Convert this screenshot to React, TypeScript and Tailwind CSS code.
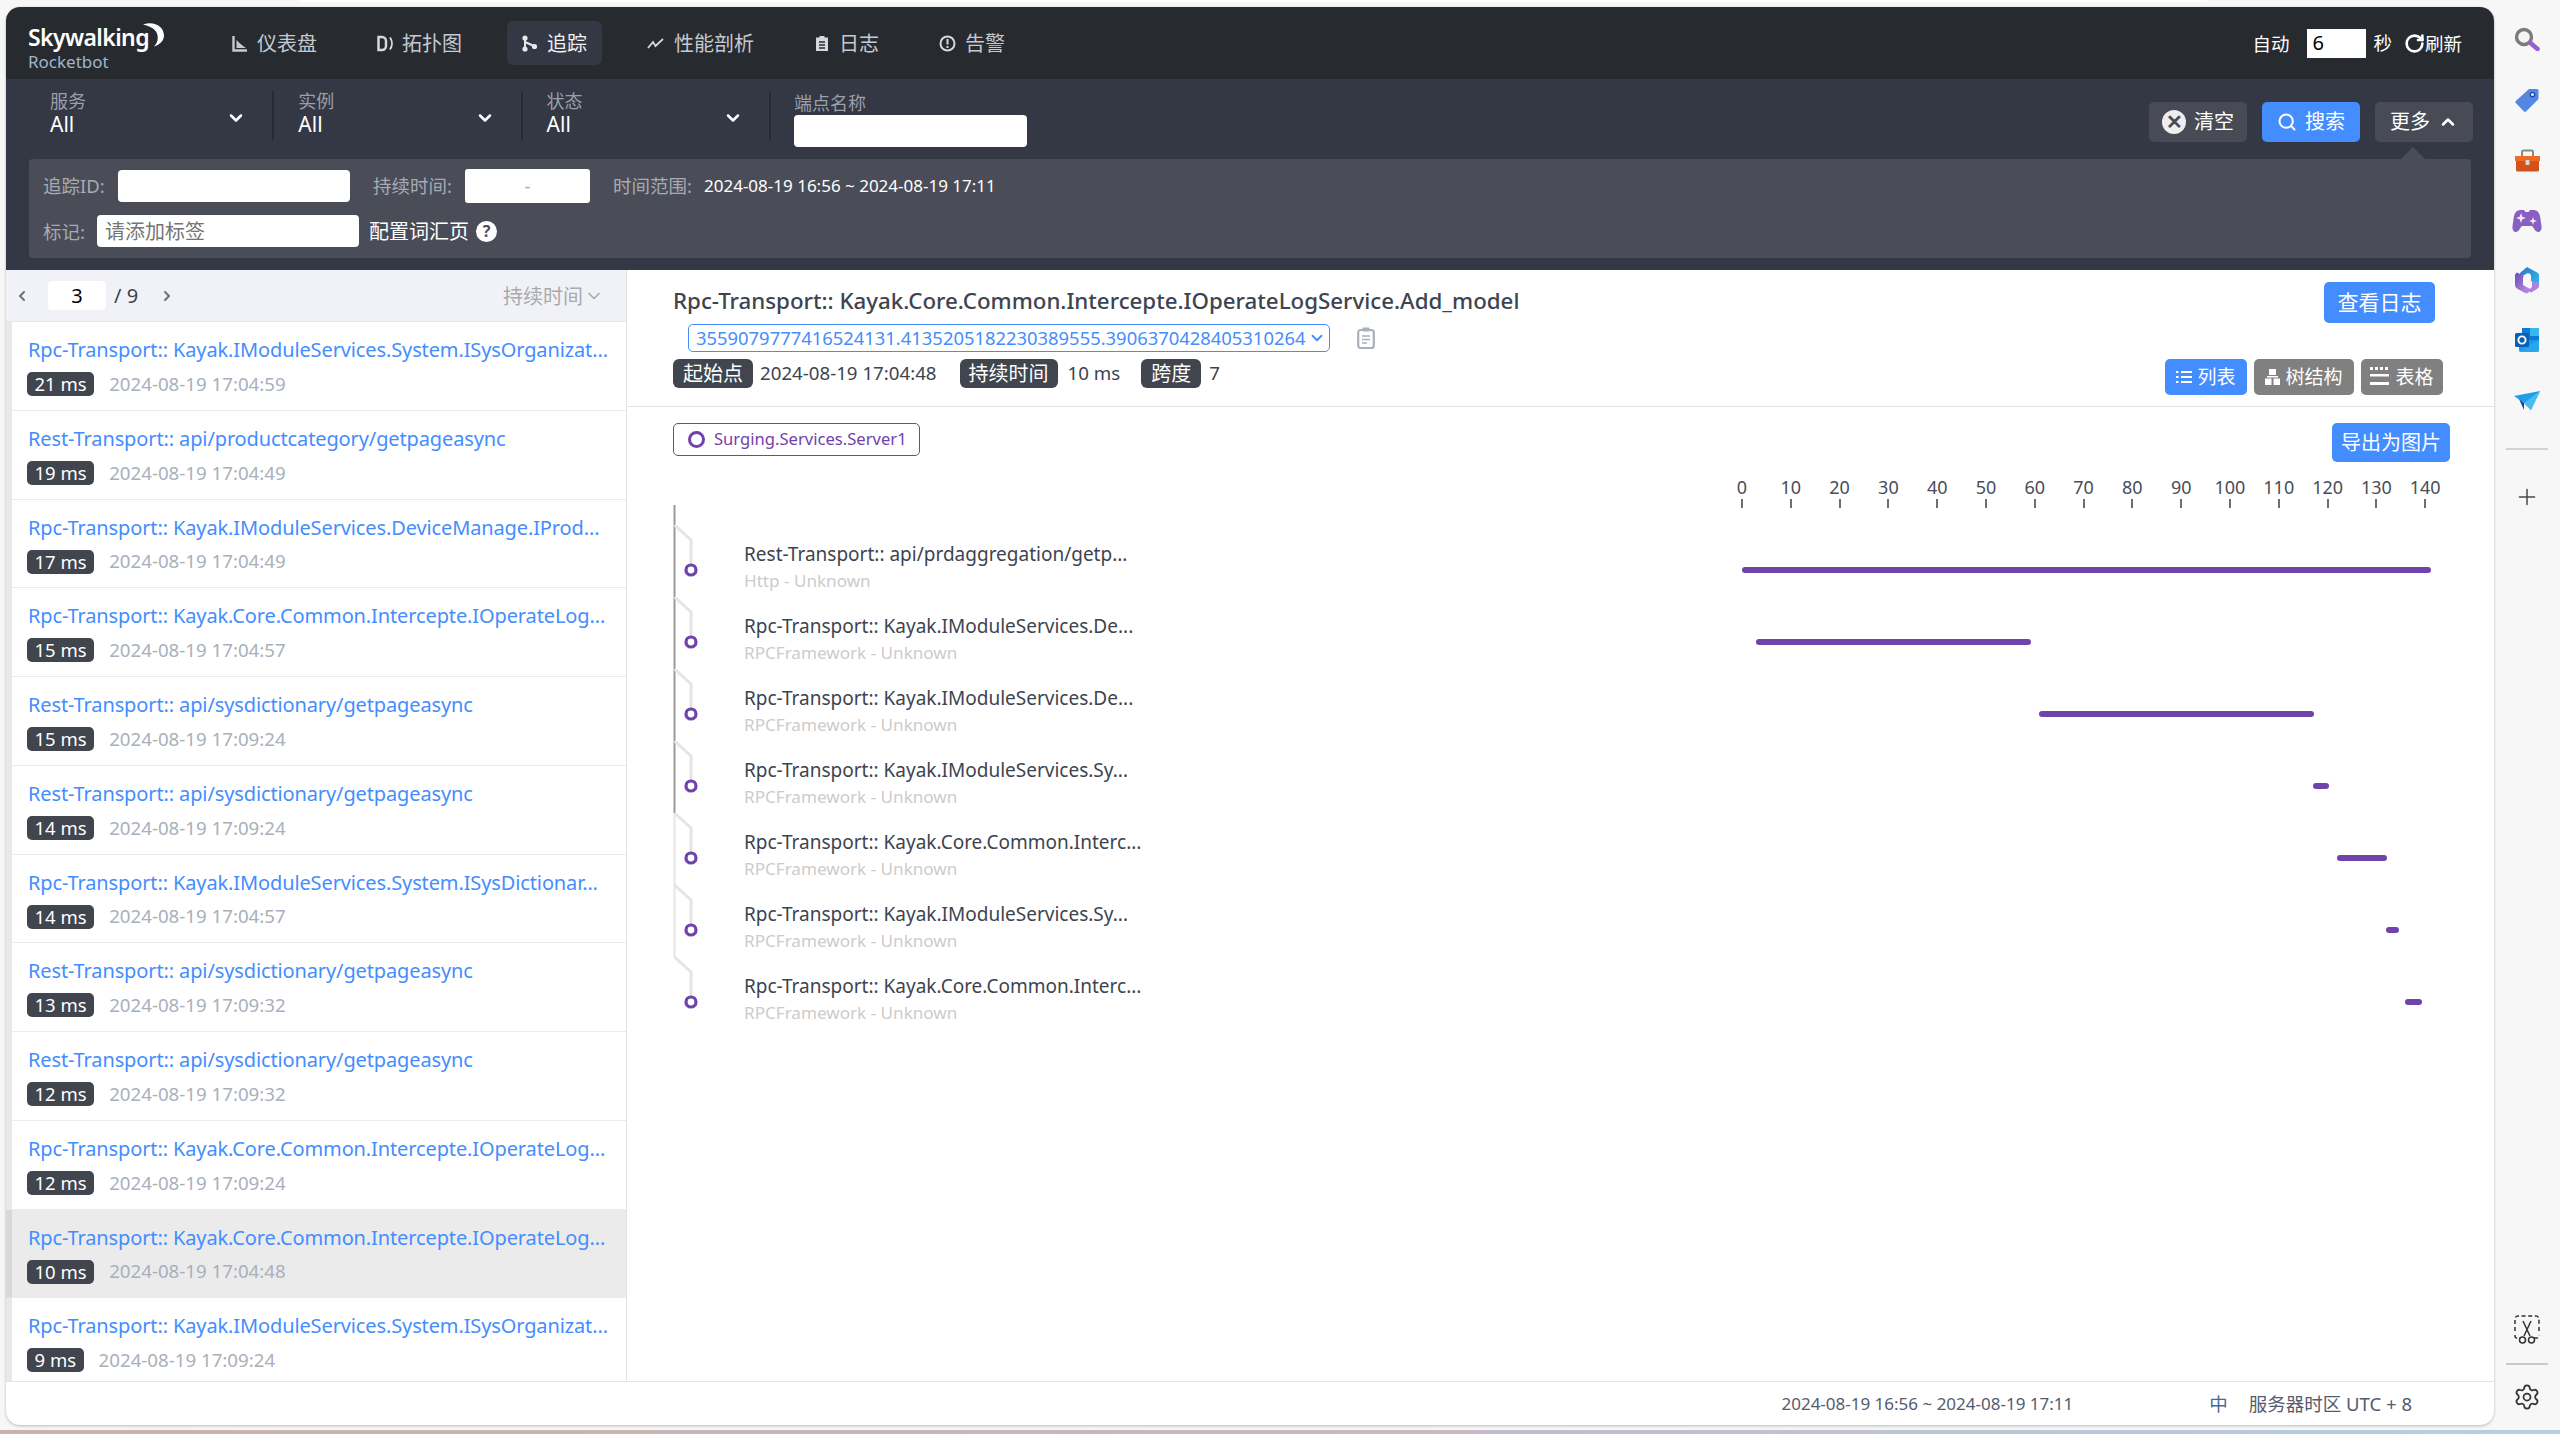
import { ChevronDown, ChevronLeft, ChevronRight, ChevronUp, Plus, RotateCw, Search, Settings } from "lucide-react";

const FONT = "font-['Noto_Sans','Noto_Sans_CJK_SC',sans-serif]";

const traces = [
  { title: "Rpc-Transport:: Kayak.IModuleServices.System.ISysOrganizat...", ms: "21 ms", time: "2024-08-19 17:04:59" },
  { title: "Rest-Transport:: api/productcategory/getpageasync", ms: "19 ms", time: "2024-08-19 17:04:49" },
  { title: "Rpc-Transport:: Kayak.IModuleServices.DeviceManage.IProd...", ms: "17 ms", time: "2024-08-19 17:04:49" },
  { title: "Rpc-Transport:: Kayak.Core.Common.Intercepte.IOperateLog...", ms: "15 ms", time: "2024-08-19 17:04:57" },
  { title: "Rest-Transport:: api/sysdictionary/getpageasync", ms: "15 ms", time: "2024-08-19 17:09:24" },
  { title: "Rest-Transport:: api/sysdictionary/getpageasync", ms: "14 ms", time: "2024-08-19 17:09:24" },
  { title: "Rpc-Transport:: Kayak.IModuleServices.System.ISysDictionar...", ms: "14 ms", time: "2024-08-19 17:04:57" },
  { title: "Rest-Transport:: api/sysdictionary/getpageasync", ms: "13 ms", time: "2024-08-19 17:09:32" },
  { title: "Rest-Transport:: api/sysdictionary/getpageasync", ms: "12 ms", time: "2024-08-19 17:09:32" },
  { title: "Rpc-Transport:: Kayak.Core.Common.Intercepte.IOperateLog...", ms: "12 ms", time: "2024-08-19 17:09:24" },
  { title: "Rpc-Transport:: Kayak.Core.Common.Intercepte.IOperateLog...", ms: "10 ms", time: "2024-08-19 17:04:48", active: true },
  { title: "Rpc-Transport:: Kayak.IModuleServices.System.ISysOrganizat...", ms: "9 ms", time: "2024-08-19 17:09:24" },
];

const spans = [
  { title: "Rest-Transport:: api/prdaggregation/getp...", sub: "Http - Unknown", start: 0, width: 689, top: -29, end: 72, dark: true },
  { title: "Rpc-Transport:: Kayak.IModuleServices.De...", sub: "RPCFramework - Unknown", start: 14, width: 275, top: 0, end: 72, dark: true },
  { title: "Rpc-Transport:: Kayak.IModuleServices.De...", sub: "RPCFramework - Unknown", start: 297, width: 275, top: 0, end: 72, dark: true },
  { title: "Rpc-Transport:: Kayak.IModuleServices.Sy...", sub: "RPCFramework - Unknown", start: 571, width: 16, top: 0, end: 63, dark: true },
  { title: "Rpc-Transport:: Kayak.Core.Common.Interc...", sub: "RPCFramework - Unknown", start: 595, width: 50, top: -9, end: 72, dark: false },
  { title: "Rpc-Transport:: Kayak.IModuleServices.Sy...", sub: "RPCFramework - Unknown", start: 644, width: 13, top: 0, end: 63, dark: false },
  { title: "Rpc-Transport:: Kayak.Core.Common.Interc...", sub: "RPCFramework - Unknown", start: 663, width: 17, top: 0, end: 0, dark: false },
];

const ticks = [0, 10, 20, 30, 40, 50, 60, 70, 80, 90, 100, 110, 120, 130, 140];

function DashIcon() {
  return (
    <svg viewBox="0 0 16 17" className="h-[17px] w-[16px]" fill="none">
      <path d="M1.5 1v14.5H15" stroke="#c5c9d0" strokeWidth="2.4" />
      <path d="M4.5 13V5l3 3 3 2.5 3.5 2.5z" fill="#c5c9d0" />
    </svg>
  );
}

function TopoIcon() {
  return (
    <svg viewBox="0 0 16 17" className="h-[17px] w-[16px]" fill="none" stroke="#d5d8dd" strokeWidth="2.5">
      <path d="M1.5 2h3.5a4 4 0 0 1 4 4v5a4 4 0 0 1-4 4H1.5z" />
      <path d="M13 2.5c2.5 3.5 2.5 8.5 0 12" strokeWidth="2" />
    </svg>
  );
}

function TraceIcon() {
  return (
    <svg viewBox="0 0 16 17" className="h-[17px] w-[16px]" fill="#e6e8eb" stroke="#e6e8eb" strokeWidth="2">
      <path d="M3 3v11M3 7l9 4" fill="none" />
      <circle cx="3" cy="3" r="1.6" />
      <circle cx="3" cy="14" r="1.6" />
      <circle cx="12.5" cy="11.5" r="1.6" />
    </svg>
  );
}

function ProfileIcon() {
  return (
    <svg viewBox="0 0 18 11" className="h-[11px] w-[18px]" fill="none" stroke="#d5d8dd" strokeWidth="1.8">
      <path d="M1 10l5-6 2.5 4L16 1" />
    </svg>
  );
}

function LogIcon() {
  return (
    <svg viewBox="0 0 16 17" className="h-[17px] w-[16px]">
      <path d="M2 2.5h3.5V1h5v1.5H14V16H2z" fill="#d5d8dd" />
      <path d="M5 7h6M5 10h6M5 13h6" stroke="#272b30" strokeWidth="1.4" />
    </svg>
  );
}

function AlertIcon() {
  return (
    <svg viewBox="0 0 17 17" className="h-[17px] w-[17px]" fill="none">
      <circle cx="8.5" cy="8.5" r="7" stroke="#d5d8dd" strokeWidth="2" />
      <path d="M8.5 4v5.5M8.5 11v2" stroke="#d5d8dd" strokeWidth="2" />
    </svg>
  );
}

function NavItem({ icon, label, active }: { icon: React.ReactNode; label: string; active?: boolean }) {
  return (
    <div className={`flex h-[44px] items-center gap-[9px] rounded-[6px] px-[15px] text-[20px] ${active ? "bg-[#333844] text-[#eef0f2]" : "text-[#c5c9d0]"}`}>
      {icon}
      <span className="pt-[2px]">{label}</span>
    </div>
  );
}

function Select({ label }: { label: string }) {
  return (
    <div className="relative flex h-[49px] w-[248.3px] flex-col border-r-2 border-[#272b30] pl-[24px]">
      <div className="-mt-px text-[18px] leading-[22px] text-[#9a9fa9]">{label}</div>
      <div className="text-[21px] leading-[24px] text-white">All</div>
      <ChevronDown className="absolute right-[26px] top-[17px] h-[20px] w-[20px] text-white" strokeWidth={3} />
    </div>
  );
}

function ToolButton({ children, blue }: { children: React.ReactNode; blue?: boolean }) {
  return (
    <div className={`flex h-[40px] w-[98px] items-center justify-center gap-[8px] rounded-[5px] text-[20px] text-white ${blue ? "bg-[#448dfe]" : "bg-[#484b55]"}`}>
      {children}
    </div>
  );
}

function ViewButton({ children, blue, w }: { children: React.ReactNode; blue?: boolean; w: string }) {
  return (
    <div className={`flex h-[36px] items-center justify-center gap-[5px] rounded-[5px] text-[19px] text-white ${w} ${blue ? "bg-[#448dfe]" : "bg-[#808080]"}`}>
      {children}
    </div>
  );
}

function MetaTag({ children, w }: { children: React.ReactNode; w: string }) {
  return <span className={`flex h-[29px] items-center justify-center rounded-[6px] bg-[#40454e] text-[20px] text-white ${w}`}>{children}</span>;
}

function TraceRow({ item }: { item: (typeof traces)[number] }) {
  return (
    <div className={`h-[88.75px] shrink-0 border-b border-l-[6px] border-b-[#ebebeb] pl-[16px] pt-[16px] ${item.active ? "border-l-[#d8d8d8] bg-[#ebebeb]" : "border-l-[#e8e8e8] bg-white"}`}>
      <div className="h-[24px] whitespace-nowrap text-[20px] leading-[24px] tracking-[-0.12px] text-[#448dfe]">{item.title}</div>
      <div className="mt-[10px] flex h-[24px] items-center gap-[15px]">
        <span className="-ml-px flex h-[24px] items-center rounded-[5px] bg-[#40454e] px-[7.5px] text-[18.5px] text-white">{item.ms}</span>
        <span className="text-[18.7px] text-[#a9b0bc]">{item.time}</span>
      </div>
    </div>
  );
}

function SpanRow({ span }: { span: (typeof spans)[number] }) {
  const trunk = span.dark ? "#999999" : "#e5e5e5";
  return (
    <div className="flex h-[72px] shrink-0">
      <svg viewBox="0 0 71 72" className="ml-[46px] h-[72px] w-[71px] shrink-0 overflow-visible" fill="none">
        <path d={`M1.5 ${span.top}V${span.end}`} stroke={trunk} strokeWidth="2" />
        <path d="M1.5 -9L18 6V36" stroke="#e5e5e5" strokeWidth="3" />
        <circle cx="18" cy="36" r="5" fill="#fff" stroke="#6f42ac" strokeWidth="3.2" />
      </svg>
      <div className="w-[998px] shrink-0 pt-[8px]">
        <div className="h-[24px] whitespace-nowrap text-[19px] leading-[24px] text-[#3d444f]">{span.title}</div>
        <div className="mt-[4px] h-[22px] whitespace-nowrap text-[17.1px] leading-[22px] text-[#cccccc]">{span.sub}</div>
      </div>
      <div className="flex-1 pt-[33px]">
        <div className="h-[6px] rounded-[3px] bg-[#6f42ac]" style={{ marginLeft: span.start, width: span.width }} />
      </div>
    </div>
  );
}

function SideIcons() {
  return (
    <div className="flex flex-col items-center pt-[2px]">
      <div className="flex h-[60px] items-center justify-center">
        <svg viewBox="0 0 26 24" className="h-[24px] w-[26px]" fill="none">
          <circle cx="10" cy="10" r="7.5" stroke="#7c7c7c" strokeWidth="3.4" fill="#f4f4f4" />
          <path d="M16.5 16l7 6" stroke="#9462cf" strokeWidth="4.5" strokeLinecap="round" />
        </svg>
      </div>
      <div className="flex h-[61px] items-center justify-center">
        <svg viewBox="0 0 24 24" className="h-[24px] w-[24px]">
          <path d="M14 1h8a1.5 1.5 0 0 1 1.5 1.5V11L11 23.5a1.5 1.5 0 0 1-2 0L.8 15a1.5 1.5 0 0 1 0-2z" fill="#5487e3" />
          <circle cx="17.5" cy="6.5" r="2.2" fill="#e8ecf6" stroke="#23439c" strokeWidth="1.3" />
        </svg>
      </div>
      <div className="flex h-[61px] items-center justify-center">
        <svg viewBox="0 0 27 23" className="h-[23px] w-[27px]" fill="none">
          <path d="M8 7V3a1.5 1.5 0 0 1 1.5-1.5h8A1.5 1.5 0 0 1 19 3v4" stroke="#8a8a8a" strokeWidth="2" />
          <path d="M1 7h25v5H1z" fill="#ef6a25" />
          <path d="M2 12h23v9a1.5 1.5 0 0 1-1.5 1.5h-20A1.5 1.5 0 0 1 2 21z" fill="#d4511a" />
          <rect x="11.5" y="11" width="4" height="5" rx="1" fill="#d7d7d7" />
        </svg>
      </div>
      <div className="flex h-[59px] items-center justify-center">
        <svg viewBox="0 0 30 24" className="h-[24px] w-[30px]">
          <path d="M8 1h4l1.5 2h3L18 1h4c3 0 5 2 6 6l1.5 10c.5 4-1.5 6-3.5 6-2.5 0-4-4-6-6H10c-2 2-3.5 6-6 6-2 0-4-2-3.5-6L2 7c1-4 3-6 6-6z" fill="#8a5fc4" />
          <path d="M9 4l1.3 3.7L14 9l-3.7 1.3L9 14l-1.3-3.7L4 9l3.7-1.3zM21 8l1 3 3 1-3 1-1 3-1-3-3-1 3-1z" fill="#f2ecfa" />
        </svg>
      </div>
      <div className="flex h-[60px] items-center justify-center">
        <svg viewBox="0 0 24 27" className="h-[27px] w-[24px]">
          <defs>
            <linearGradient id="cpA" x1="0" y1="0" x2="1" y2="1">
              <stop offset="0" stopColor="#2f6fd0" />
              <stop offset="1" stopColor="#2ac3e8" />
            </linearGradient>
            <linearGradient id="cpB" x1="0" y1="0" x2="1" y2="1">
              <stop offset="0" stopColor="#6a4bb8" />
              <stop offset="1" stopColor="#c596e6" />
            </linearGradient>
          </defs>
          <path d="M12 0l10 5.5a3 3 0 0 1 2 3V18l-8-4V9c0-2-2-3-4-2.5L5 10V6z" fill="url(#cpA)" />
          <path d="M0 8.5C0 7 1 6 2 5.5L9 9v0l-1 1.5V18l8 4.5L13 26a3 3 0 0 1-3 0l-8-4.5A4 4 0 0 1 0 18z" fill="url(#cpB)" />
          <path d="M24 16v3a3.5 3.5 0 0 1-2 3l-6 3.5-4-2 4-2.5c1-.7 1-2 1-3v-4z" fill="#b07fe0" />
        </svg>
      </div>
      <div className="flex h-[60px] items-center justify-center">
        <svg viewBox="0 0 24 24" className="h-[24px] w-[24px]">
          <path d="M7 0h15a2 2 0 0 1 2 2v10H7z" fill="#0f78d4" />
          <path d="M15 0h7a2 2 0 0 1 2 2v6h-9z" fill="#35b8f1" />
          <path d="M4 12h20v10a2 2 0 0 1-2 2H6a2 2 0 0 1-2-2z" fill="#14a0e8" />
          <path d="M4 24l20-12v10a2 2 0 0 1-2 2z" fill="#28a8ea" />
          <rect x="0" y="5" width="14" height="14" rx="1.5" fill="#0a5fb5" />
          <circle cx="7" cy="12" r="3.6" fill="none" stroke="#fff" strokeWidth="1.9" />
        </svg>
      </div>
      <div className="flex h-[60px] items-center justify-center">
        <svg viewBox="0 0 26 19" className="h-[19px] w-[26px]">
          <path d="M0 5l26-5-9 19-7-7z" fill="#1f9fe8" />
          <path d="M5 8l5 4v7z" fill="#0a4a9c" />
          <path d="M10 12L26 0 17 19z" fill="#48bdf2" />
        </svg>
      </div>
      <div className="mt-[18px] h-[2px] w-[42px] bg-[#d3d3d3]" />
      <div className="mt-[27px] flex h-[40px] items-center justify-center">
        <Plus className="h-[26px] w-[26px] text-[#4a4a4a]" strokeWidth={1.4} />
      </div>
    </div>
  );
}

export default function App() {
  return (
    <div className={`flex h-[1434px] w-[2560px] flex-col overflow-hidden bg-[#f7f7f7] ${FONT}`}>
      <div className="ml-[302px] h-[2px] w-[1905px] bg-white" />
      <div className="mt-[5px] flex min-h-0 flex-1">
        {/* browser tab */}
        <div className="ml-[6px] mb-[5px] flex w-[2488px] flex-col overflow-hidden rounded-[14px] bg-white shadow-[0_1px_3px_rgba(0,0,0,0.25)]">
          {/* top nav */}
          <div className="flex h-[72px] shrink-0 items-center bg-[#272b30] text-white">
            <div className="relative ml-[22px] h-[50px] w-[189px] shrink-0 pt-[5px]">
              <div className="text-[23px] font-semibold leading-[28px] tracking-[-0.6px] text-white">Skywalking</div>
              <div className="mt-px text-[17px] leading-[20px] text-[#9fb5cc]">Rocketbot</div>
              <svg viewBox="0 0 21 24" className="absolute left-[115px] top-[4px] h-[25px] w-[21px]">
                <path d="M0 2C11-2 21 4 21 13 21 18 17 22 11 24 15 20 16 14 13 9 10 5 5 3 0 2z" fill="#fff" />
              </svg>
            </div>
            <div className="flex items-center gap-[30px]">
              <NavItem icon={<DashIcon />} label="仪表盘" />
              <NavItem icon={<TopoIcon />} label="拓扑图" />
              <NavItem icon={<TraceIcon />} label="追踪" active />
              <NavItem icon={<ProfileIcon />} label="性能剖析" />
              <NavItem icon={<LogIcon />} label="日志" />
              <NavItem icon={<AlertIcon />} label="告警" />
            </div>
            <div className="ml-auto flex items-center pr-[32px] text-[18.5px]">
              <span className="pt-[2px]">自动</span>
              <div className="ml-[18px] flex h-[29px] w-[59px] items-center bg-white pl-[5px] text-[20px] text-black">6</div>
              <span className="ml-[7px]">秒</span>
              <RotateCw className="ml-[12px] h-[21px] w-[21px]" strokeWidth={3} />
              <span className="pt-[2px]">刷新</span>
            </div>
          </div>

          {/* search bar */}
          <div className="h-[191px] shrink-0 bg-[#333844]">
            <div className="flex h-[80px]">
              <div className="flex pl-[20px] pt-[12px]">
                <Select label="服务" />
                <Select label="实例" />
                <Select label="状态" />
                <div className="pl-[23px]">
                  <div className="text-[18px] leading-[24px] text-[#9a9fa9]">端点名称</div>
                  <div className="h-[32px] w-[233px] rounded-[4px] bg-white" />
                </div>
              </div>
              <div className="ml-auto flex gap-[15px] pr-[21px] pt-[23px]">
                <ToolButton>
                  <span className="flex h-[24px] w-[24px] items-center justify-center rounded-full bg-[#eeeeee] text-[20px] font-bold leading-none text-[#484b55]">✕</span>
                  <span>清空</span>
                </ToolButton>
                <ToolButton blue>
                  <Search className="h-[20px] w-[20px]" strokeWidth={2.4} />
                  <span>搜索</span>
                </ToolButton>
                <ToolButton>
                  <span>更多</span>
                  <ChevronUp className="h-[20px] w-[20px]" strokeWidth={3} />
                </ToolButton>
              </div>
            </div>
            {/* more filters */}
            <div className="relative mx-[23px] flex h-[99px] flex-col gap-[13px] rounded-[4px] bg-[#4a4d58] pl-[14px] pt-[11px] text-[18.5px] text-[#a6aab3]">
              <div className="absolute right-[46px] top-[-12px] h-0 w-0 border-x-[12px] border-b-[12px] border-x-transparent border-b-[#4a4d58]" />
              <div className="flex h-[32px] items-center">
                <span className="w-[75px]">追踪ID:</span>
                <div className="h-[32px] w-[232px] rounded-[4px] bg-white" />
                <span className="ml-[23px] w-[92px]">持续时间:</span>
                <div className="flex h-[34px] w-[125px] items-center justify-center rounded-[3px] bg-white text-[#aaaaaa]">-</div>
                <span className="ml-[23px] w-[91px]">时间范围:</span>
                <span className="text-[17px] text-white">2024-08-19 16:56 ~ 2024-08-19 17:11</span>
              </div>
              <div className="flex h-[32px] items-center">
                <span className="w-[54px] pt-[2px]">标记:</span>
                <div className="flex h-[32px] w-[262px] items-center rounded-[4px] bg-white pl-[8px] pt-[2px] text-[20px] text-[#757575]">请添加标签</div>
                <span className="ml-[10px] pt-[2px] text-[20px] text-white">配置词汇页</span>
                <span className="ml-[7px] flex h-[21px] w-[21px] items-center justify-center rounded-full bg-white text-[16px] font-bold text-[#4a4d58]">?</span>
              </div>
            </div>
          </div>

          {/* main */}
          <div className="flex min-h-0 flex-1">
            <div className="flex w-[621px] shrink-0 flex-col border-r border-[#e4e4e4]">
              <div className="flex h-[52px] shrink-0 items-center border-b border-[#e4e6ec] bg-[#f0f2f7] pl-[8px] pr-[22px]">
                <ChevronLeft className="h-[26px] w-[16px] text-[#6b717c]" strokeWidth={3} />
                <div className="ml-[18px] flex h-[29px] w-[58px] items-center justify-center rounded-[4px] bg-white text-[20px] text-black">3</div>
                <span className="ml-[8px] text-[20px] text-[#3d444f]">/ 9</span>
                <ChevronRight className="ml-[21px] h-[26px] w-[16px] text-[#6b717c]" strokeWidth={3} />
                <span className="ml-auto pt-[3px] text-[20px] text-[#aaaaaa]">持续时间</span>
                <ChevronDown className="ml-[1px] h-[20px] w-[20px] text-[#aaaaaa]" strokeWidth={2} />
              </div>
              <div className="flex min-h-0 flex-1 flex-col overflow-hidden">
                {traces.map((t, i) => (
                  <TraceRow key={i} item={t} />
                ))}
              </div>
            </div>

            <div className="flex min-w-0 flex-1 flex-col">
              <div className="flex h-[137px] shrink-0 justify-between border-b border-[#e4e4e4] pl-[46px] pr-[51px]">
                <div>
                  <div className="mt-[19px] h-[25px] whitespace-nowrap text-[22.3px] font-medium leading-[24px] text-[#3d444f]">Rpc-Transport:: Kayak.Core.Common.Intercepte.IOperateLogService.Add_model</div>
                  <div className="ml-[15px] mt-[10px] flex items-center">
                    <div className="flex h-[28px] w-[642px] items-center justify-between rounded-[5px] border border-[#448dfe] pl-[7px] pr-[3px] text-[18.4px] leading-none text-[#448dfe]">
                      <span className="whitespace-nowrap">3559079777416524131.4135205182230389555.3906370428405310264</span>
                      <ChevronDown className="h-[18px] w-[18px]" strokeWidth={2.4} />
                    </div>
                    <svg viewBox="0 0 18 22" className="ml-[27px] h-[22px] w-[18px]" fill="none">
                      <rect x="1.2" y="3" width="15.6" height="18" rx="2.5" stroke="#a8b0bd" strokeWidth="2.2" />
                      <rect x="5.5" y="0.5" width="7" height="4" rx="1" fill="#a8b0bd" />
                      <path d="M5 9h8M5 12.5h8M5 16h5" stroke="#a8b0bd" strokeWidth="1.5" />
                    </svg>
                  </div>
                  <div className="mt-[7px] flex items-center text-[18.7px] text-[#3d444f]">
                    <MetaTag w="w-[80px]">起始点</MetaTag>
                    <span className="ml-[7px]">2024-08-19 17:04:48</span>
                    <span className="ml-[23px]" />
                    <MetaTag w="w-[98px]">持续时间</MetaTag>
                    <span className="ml-[10px]">10 ms</span>
                    <span className="ml-[21px]" />
                    <MetaTag w="w-[60px]">跨度</MetaTag>
                    <span className="ml-[8px]">7</span>
                  </div>
                </div>
                <div className="flex flex-col items-end pt-[12px]">
                  <div className="mr-[8px] flex h-[41px] w-[111px] items-center justify-center rounded-[5px] bg-[#448dfe] text-[21px] text-white">查看日志</div>
                  <div className="mt-[36px] flex gap-[7px]">
                    <ViewButton blue w="w-[82px]">
                      <svg viewBox="0 0 16 16" className="h-[16px] w-[16px]" fill="none" stroke="#fff" strokeWidth="2">
                        <path d="M0 3h2.5M5 3h11M0 8h2.5M5 8h11M0 13h2.5M5 13h11" />
                      </svg>
                      列表
                    </ViewButton>
                    <ViewButton w="w-[100px]">
                      <svg viewBox="0 0 15 16" className="h-[16px] w-[15px]" fill="#fff">
                        <path d="M4 0h7v6H4zM0 9.5h6.5V16H0zM8.5 9.5H15V16H8.5zM2 7h11v1.5H2z" />
                      </svg>
                      树结构
                    </ViewButton>
                    <ViewButton w="w-[82px]">
                      <svg viewBox="0 0 20 20" className="h-[20px] w-[20px]" fill="#fff">
                        <path d="M0 0h3v3H0zM5 0h3v3H5zM10 0h3v3h-3zM15 0h3v3h-3zM0 7h19v2.5H0zM0 15h19v3H0z" />
                      </svg>
                      表格
                    </ViewButton>
                  </div>
                </div>
              </div>

              <div className="flex min-h-0 flex-1 flex-col overflow-hidden">
                <div className="flex h-[62px] shrink-0 justify-between pl-[46px] pr-[44px] pt-[16px]">
                  <div className="flex h-[33px] w-[247px] items-center gap-[9px] rounded-[5px] border border-[#6f42ac] pl-[14px] text-[16.6px] text-[#6f42ac]">
                    <span className="h-[17px] w-[17px] shrink-0 rounded-full border-[3px] border-[#6f42ac]" />
                    <span className="whitespace-nowrap">Surging.Services.Server1</span>
                  </div>
                  <div className="flex h-[39px] w-[118px] items-center justify-center rounded-[5px] bg-[#448dfe] text-[20px] text-white">导出为图片</div>
                </div>
                <div className="ml-[1115px] flex h-[65px] shrink-0 pt-[8px]">
                  {ticks.map((t) => (
                    <div key={t} className="w-[48.8px] shrink-0">
                      <div className="flex w-0 flex-col items-center">
                        <span className="text-[18px] leading-[21px] text-[#4a4d58]">{t}</span>
                        <span className="mt-px h-[9px] w-[2px] shrink-0 bg-[#6b6e78]" />
                      </div>
                    </div>
                  ))}
                </div>
                {spans.map((s, i) => (
                  <SpanRow key={i} span={s} />
                ))}
              </div>
            </div>
          </div>

          {/* footer */}
          <div className="flex h-[44px] shrink-0 items-center justify-end border-t border-[#e4e4e4] pr-[82px] text-[18.5px] text-[#555b6e]">
            <span className="text-[17px]">2024-08-19 16:56 ~ 2024-08-19 17:11</span>
            <span className="ml-[136px] text-[#486a9b]">中</span>
            <span className="ml-[21px]">服务器时区 UTC + 8</span>
          </div>
        </div>

        {/* edge sidebar */}
        <div className="flex min-h-0 flex-1 flex-col items-center">
          <SideIcons />
          <div className="mt-auto flex flex-col items-center pb-[19px]">
            <svg viewBox="0 0 26 30" className="h-[30px] w-[26px]" fill="none" stroke="#333" strokeWidth="1.5">
              <path d="M1 9V4a3 3 0 0 1 3-3h18a3 3 0 0 1 3 3v5M1 12v5M25 12v5M1 20v1a2 2 0 0 0 2 2h3M20 23h3a2 2 0 0 0 2-2v-1" strokeDasharray="4 2.6" />
              <path d="M9 6l7 15M17 6l-7 15" />
              <circle cx="8.5" cy="25" r="3" />
              <circle cx="17.5" cy="25" r="3" />
            </svg>
            <div className="mt-[18px] h-[2px] w-[42px] bg-[#c9c9c9]" />
            <Settings className="mt-[18px] h-[28px] w-[28px] text-[#333333]" strokeWidth={1.5} />
          </div>
        </div>
      </div>
      <div className="h-[4px] w-full shrink-0 bg-gradient-to-r from-[#c9b3a9] via-[#c7b8c0] to-[#b4cfe6]" />
    </div>
  );
}
